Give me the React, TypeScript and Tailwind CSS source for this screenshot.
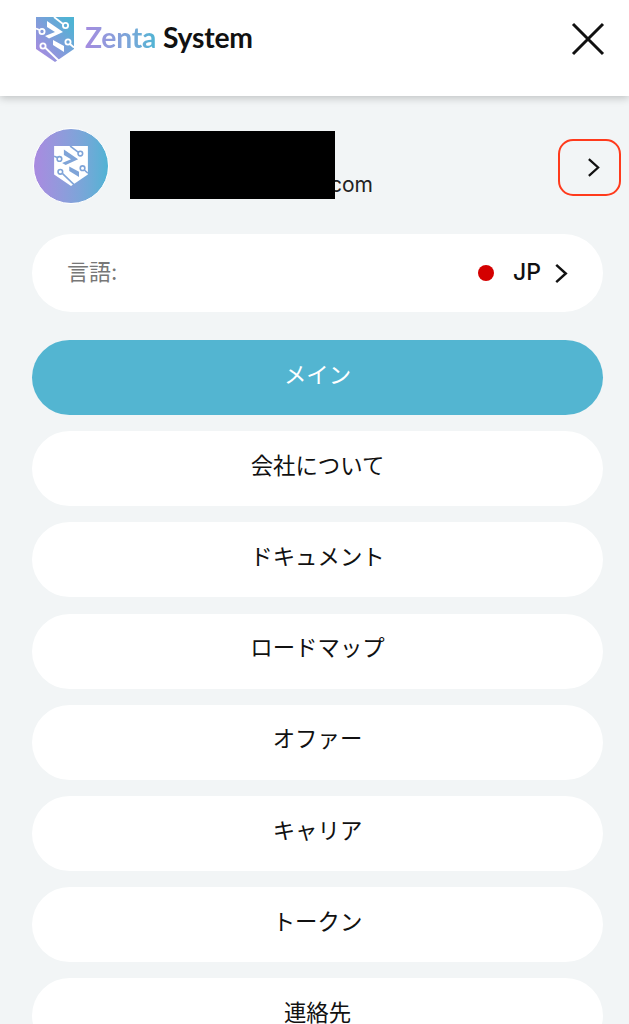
const FONT = "font-['Inter','Noto_Sans_CJK_JP',sans-serif]";

const menuItems = ["会社について", "ドキュメント", "ロードマップ", "オファー", "キャリア", "トークン", "連絡先"];

// shield with the circuit marks, used in the header and the avatar
const LogoMark = ({ shield, mark, className }: { shield: string; mark: string; className: string }) => (
    <svg viewBox="0 0 38 45" className={className} fill="none">
        <defs>
            <linearGradient id="logoShield" x1="0" y1="1" x2="1" y2="0">
                <stop offset="0.1" stopColor="#a98ae0" />
                <stop offset="0.9" stopColor="#4fb3d4" />
            </linearGradient>
        </defs>
        <path d="M0 0H38V32L19 45L0 32Z" fill={shield} />
        <g stroke={mark} strokeWidth="1.8">
            <path d="M18 0L27 7" />
            <circle cx="29.5" cy="8.5" r="2.6" />
            <path d="M0 11.5L3.5 13" />
            <circle cx="6" cy="14.5" r="2.6" />
            <circle cx="32" cy="25" r="2.6" />
            <path d="M34 27L38 30.5" />
            <circle cx="7" cy="29" r="2.6" />
            <path d="M9.5 31L23 44" />
        </g>
        <path d="M11 4L27 15L13 21.5L9 19L19 15L11 10Z" fill={mark} />
        <path d="M17 23L28 29V35L17 28Z" fill={mark} />
    </svg>
);

const MenuPill = ({ label, active }: { label: string; active?: boolean }) => (
    <a
        className={`flex h-[75px] shrink-0 items-center justify-center rounded-[38px] pb-[6px] text-[22.4px] ${
            active ? "bg-[#53b5d1] text-white" : "bg-white text-[#111]"
        }`}
    >
        {label}
    </a>
);

export default function App() {
    return (
        <div className={`${FONT} h-[1024px] overflow-hidden bg-[#f2f5f6]`}>
            {/* Header */}
            <header className="flex h-[96px] items-start justify-between bg-white pl-[36px] pr-[24px] pt-[17px] shadow-[0_2px_8px_rgba(0,0,0,0.22)]">
                <div className="flex items-start gap-[11px]">
                    <LogoMark shield="url(#logoShield)" mark="#ffffff" className="h-[45px] w-[38px]" />
                    <div className="font-['Lato',sans-serif] text-[28.3px] font-bold leading-[40px] tracking-[-0.2px]">
                        <span className="bg-gradient-to-r from-[#a58ce0] to-[#4fb4d4] bg-clip-text text-transparent">Zenta</span>{" "}
                        <span className="text-[#111]">System</span>
                    </div>
                </div>
                <button className="mt-[5px]">
                    <svg viewBox="0 0 34 34" className="h-[34px] w-[34px]" fill="none" stroke="#111" strokeWidth="3">
                        <path d="M2 2L32 32M32 2L2 32" />
                    </svg>
                </button>
            </header>

            <main className="flex flex-col pl-[32px] pr-[26px]">
                {/* Account row */}
                <div className="mt-[32px] flex h-[76px] items-center">
                    <div className="ml-[1px] flex h-[76px] w-[76px] items-center justify-center rounded-full border border-white bg-gradient-to-r from-[#a98ae0] to-[#4fb3d4]">
                        <LogoMark shield="#ffffff" mark="#7fa4d8" className="h-[40px] w-[34px]" />
                    </div>
                    {/* redaction block covers the start of the address */}
                    <div className="relative ml-[21px] mt-[-3px] h-[68px] w-[205px]">
                        <span className="absolute left-[200px] top-[41px] text-[21px] leading-[26px] text-[#222]">com</span>
                        <div className="absolute inset-0 bg-black" />
                    </div>
                    <button className="ml-auto mr-[-18px] mt-[3px] flex h-[57px] w-[63px] items-center justify-center rounded-[15px] border-[2.5px] border-[#ff3a1c] pl-[7px]">
                        <svg viewBox="0 0 14 22" className="h-[21px] w-[13px]" fill="none" stroke="#111" strokeWidth="2.4">
                            <path d="M2 2L12 11L2 20" />
                        </svg>
                    </button>
                </div>

                {/* Language */}
                <div className="mt-[30px] flex h-[78px] items-center rounded-[39px] bg-white pl-[35px] pr-[35px]">
                    <span className="pb-[2px] text-[22px] text-[#777]">言語:</span>
                    <span className="ml-auto h-[16px] w-[16px] rounded-full bg-[#d40000]" />
                    <span className="ml-[19px] pb-[2px] text-[23px] font-medium text-[#111]">JP</span>
                    <svg viewBox="0 0 14 22" className="ml-[13px] h-[21px] w-[14px]" fill="none" stroke="#111" strokeWidth="2.6">
                        <path d="M2 2L12 11L2 20" />
                    </svg>
                </div>

                {/* Menu */}
                <nav className="mt-[28px] flex flex-col gap-[16.2px]">
                    <MenuPill label="メイン" active />
                    {menuItems.map((item) => (
                        <MenuPill key={item} label={item} />
                    ))}
                </nav>
            </main>
        </div>
    );
}
